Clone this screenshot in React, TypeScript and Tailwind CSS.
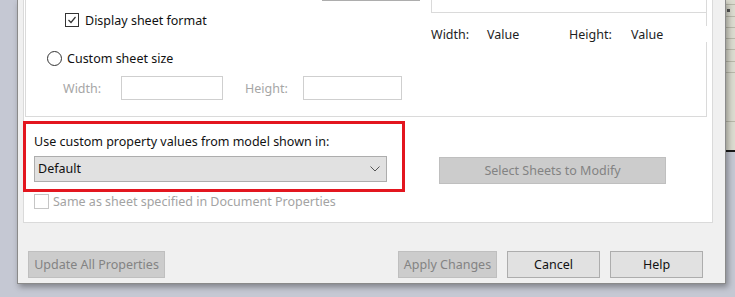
import React from "react";

const font = { fontFamily: '"Noto Sans", "Open Sans", Arial, sans-serif' };

const Btn = ({ label, w, disabled }: { label: string; w: string; disabled?: boolean }) => (
  <div
    className={`${w} h-[27px] flex items-center justify-center border text-[12.5px] pt-px ${
      disabled ? "bg-[#cccccc] border-[#bfbfbf] text-[#838383]" : "bg-[#e1e1e1] border-[#adadad] text-[#111]"
    }`}
  >
    {label}
  </div>
);

export default function App() {
  const stripeLines = [4, 16, 27, 38, 49, 61, 72, 121];
  return (
    <div className="relative w-[735px] h-[297px] overflow-hidden bg-[#c5c8d3]" style={font}>
      {/* window behind, right edge */}
      <div className="absolute left-[725px] top-0 w-[10px] h-[152px] bg-[#dcdcd0] border-b-2 border-[#1a1a1a]">
        {stripeLines.map((y) => (
          <div key={y} className="absolute left-0 w-full h-px bg-[#b9b9ab]" style={{ top: y }} />
        ))}
        <div className="absolute left-[2px] top-[9px] w-[3px] h-[3px] bg-[#555]" />
      </div>

      {/* dialog */}
      <div className="absolute left-[17px] top-0 w-[709px] h-[284px] bg-[#f0f0f0] border-l border-r border-b border-[#8a8a8a] shadow-[2px_3px_6px_rgba(0,0,0,0.35)]">
        <div className="ml-[5px] w-[690px] h-[223px] bg-white border-l border-r border-b border-[#dadada] flex flex-col">
          {/* top group */}
          <div className="ml-px w-[682px] h-[117px] border-l border-b border-[#dadada] flex">
            <div className="w-[405px] flex flex-col">
              <div className="ml-[296px] w-[98px] h-px bg-[#adadad]" />
              <div className="mt-[11px] ml-[39px] h-[16px] flex items-center gap-[6px] text-[12.5px] text-[#111]">
                <div className="w-[14px] h-[14px] border border-[#333] flex items-center justify-center">
                  <svg width="10" height="10" viewBox="0 0 10 10">
                    <polyline points="1.5,5 4,7.5 8.5,2" fill="none" stroke="#333" strokeWidth="1.2" />
                  </svg>
                </div>
                <span className="pt-[2px]">Display sheet format</span>
              </div>
              <div className="mt-[22px] ml-[21px] h-[16px] flex items-center gap-[5px] text-[12.5px] text-[#111]">
                <div className="w-[15px] h-[15px] rounded-full border border-[#333]" />
                <span className="pt-[2px]">Custom sheet size</span>
              </div>
              <div className="mt-[10px] ml-[37px] flex items-center text-[12.5px] text-[#a6a6a6]">
                <span className="w-[58px] pt-[2px]">Width:</span>
                <div className="w-[102px] h-[24px] border border-[#cfcfcf]" />
                <span className="ml-[22px] w-[58px] pt-[2px]">Height:</span>
                <div className="w-[99px] h-[24px] border border-[#cfcfcf]" />
              </div>
            </div>
            <div className="flex-1 flex flex-col">
              <div className="h-[26px] border-r border-[#dadada]">
                <div className="h-[13px] border-l border-b border-[#dadada]" />
              </div>
              <div className="h-[16px] pt-[2px] flex items-center text-[12.5px] text-[#1e1e1e]">
                <span className="w-[56px]">Width:</span>
                <span className="w-[82px]">Value</span>
                <span className="w-[62px]">Height:</span>
                <span>Value</span>
              </div>
              <div className="flex-1 border-r border-[#dadada]" />
            </div>
          </div>

          {/* model properties */}
          <div className="ml-[10px] mt-[17px] h-[16px] flex items-center text-[12.5px] text-[#111]">
            Use custom property values from model shown in:
          </div>
          <div className="mt-[6px] ml-[10px] flex items-start h-[27px]">
            <div className="w-[353px] h-[26px] bg-[#e1e1e1] border border-[#adadad] flex items-center justify-between pl-[3px] pr-[6px] text-[12.5px] text-[#111]">
              <span className="pt-px">Default</span>
              <svg width="10" height="6" viewBox="0 0 10 6">
                <polyline points="0.5,0.5 5,5 9.5,0.5" fill="none" stroke="#555" strokeWidth="1" />
              </svg>
            </div>
            <div className="ml-[52px] mt-px">
              <Btn label="Select Sheets to Modify" w="w-[227px]" disabled />
            </div>
          </div>
          <div className="mt-[11px] ml-[10px] h-[15px] flex items-center gap-[4px] text-[12.5px] text-[#a3a3a3]">
            <div className="w-[15px] h-[15px] border border-[#c6c6c6]" />
            <span className="pt-[2px]">Same as sheet specified in Document Properties</span>
          </div>
        </div>

        {/* footer */}
        <div className="mt-[28px] flex items-center">
          <div className="ml-[10px]">
            <Btn label="Update All Properties" w="w-[137px]" disabled />
          </div>
          <div className="ml-[233px]">
            <Btn label="Apply Changes" w="w-[99px]" disabled />
          </div>
          <div className="ml-[10px]">
            <Btn label="Cancel" w="w-[93px]" />
          </div>
          <div className="ml-[10px]">
            <Btn label="Help" w="w-[93px]" />
          </div>
        </div>

        {/* annotation */}
        <div className="absolute left-[5px] top-[121px] w-[382px] h-[71px] border-[3px] border-[#e3161f]" />
      </div>
    </div>
  );
}
